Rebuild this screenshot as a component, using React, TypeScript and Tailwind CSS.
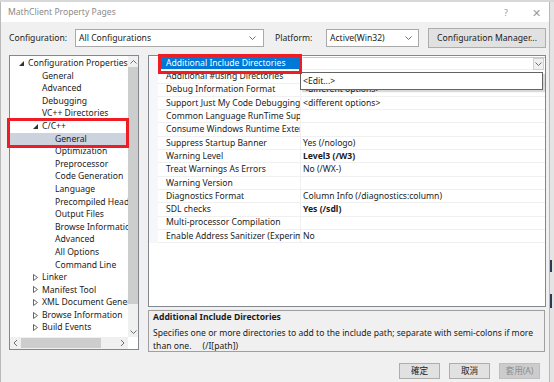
import React from 'react';

// --- Tree & grid data ---
type TreeItem = { label: string; level: number; arrow?: 'open' | 'closed'; selected?: boolean };

const treeItems: TreeItem[] = [
  { label: 'Configuration Properties', level: 0, arrow: 'open' },
  { label: 'General', level: 1 },
  { label: 'Advanced', level: 1 },
  { label: 'Debugging', level: 1 },
  { label: 'VC++ Directories', level: 1 },
  { label: 'C/C++', level: 1, arrow: 'open' },
  { label: 'General', level: 2, selected: true },
  { label: 'Optimization', level: 2 },
  { label: 'Preprocessor', level: 2 },
  { label: 'Code Generation', level: 2 },
  { label: 'Language', level: 2 },
  { label: 'Precompiled Headers', level: 2 },
  { label: 'Output Files', level: 2 },
  { label: 'Browse Information', level: 2 },
  { label: 'Advanced', level: 2 },
  { label: 'All Options', level: 2 },
  { label: 'Command Line', level: 2 },
  { label: 'Linker', level: 1, arrow: 'closed' },
  { label: 'Manifest Tool', level: 1, arrow: 'closed' },
  { label: 'XML Document Generator', level: 1, arrow: 'closed' },
  { label: 'Browse Information', level: 1, arrow: 'closed' },
  { label: 'Build Events', level: 1, arrow: 'closed' },
];

type Prop = { name: string; value?: string; bold?: boolean };

const props: Prop[] = [
  { name: 'Additional Include Directories' },
  { name: 'Additional #using Directories' },
  { name: 'Debug Information Format', value: '<different options>' },
  { name: 'Support Just My Code Debugging', value: '<different options>' },
  { name: 'Common Language RunTime Support' },
  { name: 'Consume Windows Runtime Extension' },
  { name: 'Suppress Startup Banner', value: 'Yes (/nologo)' },
  { name: 'Warning Level', value: 'Level3 (/W3)', bold: true },
  { name: 'Treat Warnings As Errors', value: 'No (/WX-)' },
  { name: 'Warning Version' },
  { name: 'Diagnostics Format', value: 'Column Info (/diagnostics:column)' },
  { name: 'SDL checks', value: 'Yes (/sdl)', bold: true },
  { name: 'Multi-processor Compilation' },
  { name: 'Enable Address Sanitizer (Experimental)', value: 'No' },
];

// arrow start per tree level; text follows 9px later
const indent = ['pl-[9px]', 'pl-[23px]', 'pl-[36px]'];

function Chevron({ className = '' }: { className?: string }) {
  return (
    <svg width="7" height="4" viewBox="0 0 7 4" className={className}>
      <path d="M0.5 0.5 L3.5 3.5 L6.5 0.5" fill="none" stroke="#606060" strokeWidth="0.9" />
    </svg>
  );
}

function Arrow({ kind }: { kind?: 'open' | 'closed' }) {
  return (
    <span className="w-[9px] shrink-0 flex items-center">
      {kind === 'open' && (
        <svg width="5" height="5" viewBox="0 0 5 5">
          <polygon points="5,0 5,5 0,5" fill="#333" />
        </svg>
      )}
      {kind === 'closed' && (
        <svg width="5" height="7" viewBox="0 0 5 7">
          <polygon points="0.5,0.5 4.5,3.5 0.5,6.5" fill="none" stroke="#555" strokeWidth="0.9" />
        </svg>
      )}
    </span>
  );
}

function TreePanel() {
  return (
    <div className="relative w-[130px] h-[295px] border border-[#828790] bg-white flex flex-col">
      <div className="flex flex-1 min-h-0">
        <div className="flex-1 min-w-0 overflow-hidden pt-[1px]">
          {treeItems.map((it, i) => (
            <div
              key={i}
              className={`h-[12.6px] flex items-center whitespace-nowrap ${indent[it.level]} ${it.selected ? 'bg-[#ccd2de]' : ''}`}
            >
              <Arrow kind={it.arrow} />
              <span>{it.label}</span>
            </div>
          ))}
        </div>
        {/* vertical scrollbar */}
        <div className="w-[10px] flex flex-col bg-[#f0f0f0]">
          <div className="h-[11px] flex items-center justify-center">
            <Chevron className="rotate-180" />
          </div>
          <div className="h-[237px] bg-[#cdcdcd]" />
          <div className="flex-1" />
          <div className="h-[11px] flex items-center justify-center">
            <Chevron />
          </div>
        </div>
      </div>
      {/* horizontal scrollbar */}
      <div className="h-[12px] flex bg-[#f0f0f0]">
        <div className="w-[11px] flex items-center justify-center">
          <Chevron className="rotate-90" />
        </div>
        <div className="w-[80px] my-[1px] bg-[#cdcdcd]" />
        <div className="flex-1" />
        <div className="w-[11px] flex items-center justify-center">
          <Chevron className="-rotate-90" />
        </div>
        <div className="w-[10px] bg-white" />
      </div>
      {/* red highlight box */}
      <div className="absolute left-[-3px] top-[62px] w-[122px] h-[30px] border-[3px] border-[#ee1c25]" />
    </div>
  );
}

function PropertyGrid() {
  return (
    <div className="relative w-[398px] h-[252px] border border-[#828790] bg-white">
      <div className="flex flex-col pt-[1px]">
        {props.map((p, i) => (
          <div key={i} className="h-[13.3px] flex">
            <div className="w-[9px] bg-[#f5f7fb]" />
            <div className="w-[143px] flex items-center pl-[3px] border-b border-[#f0f0f0] border-r overflow-hidden whitespace-nowrap">
              {i === 0 ? (
                <span className="bg-[#0078d7] text-white pl-[5px] w-[138px] h-[12px] flex items-center">{p.name}</span>
              ) : (
                <span className="pl-[5px]">{p.name}</span>
              )}
            </div>
            <div className={`flex-1 flex items-center pl-[2px] border-b border-[#f0f0f0] whitespace-nowrap ${p.bold ? 'font-bold' : ''}`}>
              {i === 0 ? (
                <div className="flex-1 h-full flex items-center justify-end border-t border-[#c8c8c8] pr-[1px]">
                  <div className="w-[11px] h-[12px] bg-[#f0f0f0] border border-[#cfcfcf] flex items-center justify-center">
                    <Chevron />
                  </div>
                </div>
              ) : (
                p.value
              )}
            </div>
          </div>
        ))}
      </div>
      {/* open dropdown list */}
      <div className="absolute left-[151px] top-[16px] w-[243px] h-[18px] bg-white border border-[#646464] shadow-[2px_2px_1px_rgba(0,0,0,0.15)] flex items-center pl-[2px]">
        &lt;Edit...&gt;
      </div>
      {/* red highlight box */}
      <div className="absolute left-[9px] top-[-2px] w-[144px] h-[20px] border-[3px] border-[#ee1c25]" />
    </div>
  );
}

export default function App() {
  return (
    <div className="w-[554px] h-[382px] bg-[#e8e8e8] overflow-hidden flex flex-col font-['Noto_Sans','Noto_Sans_CJK_TC',sans-serif] text-[8.6px] text-[#1b1b1b] leading-none">
      <div className="h-[2px] bg-[#d8d8d8]" />
      <div className="flex flex-1">
        <div className="w-[550px] bg-[#f0f0f0] border-l border-r border-[#b8b8b8] flex flex-col">
          {/* title bar */}
          <div className="h-[20px] bg-white flex items-center justify-between pl-[7px] pr-[8px] text-[8.6px] text-[#8a8a8a]">
            <span>MathClient Property Pages</span>
            <div className="flex items-center gap-[24px] text-[11px] text-[#9a9a9a]">
              <span className="text-[9px]">?</span>
              <span>✕</span>
            </div>
          </div>

          {/* configuration row */}
          <div className="flex items-center mt-[6px] pl-[8px] h-[20px]">
            <span className="w-[66px]">Configuration:</span>
            <div className="w-[189px] h-[18px] bg-white border border-[#a9a9a9] flex items-center justify-between pl-[3px] pr-[7px]">
              <span>All Configurations</span>
              <Chevron />
            </div>
            <span className="ml-[11px] w-[51px]">Platform:</span>
            <div className="w-[93px] h-[18px] bg-white border border-[#a9a9a9] flex items-center justify-between pl-[3px] pr-[6px]">
              <span>Active(Win32)</span>
              <Chevron />
            </div>
            <div className="ml-[9px] w-[118px] h-[20px] bg-[#e1e1e1] border border-[#adadad] flex items-center justify-center">
              Configuration Manager...
            </div>
          </div>

          {/* main */}
          <div className="flex mt-[7px] pl-[8px] gap-[9px]">
            <TreePanel />
            <div className="flex flex-col gap-[3px]">
              <PropertyGrid />
              <div className="w-[397px] h-[42px] border border-[#a0a0a0] bg-[#f0f0f0] px-[4px] pt-[2px] flex flex-col">
                <span className="font-bold">Additional Include Directories</span>
                <span className="mt-[5px] leading-[13px]">
                  Specifies one or more directories to add to the include path; separate with semi-colons if more than one.
                  &nbsp;&nbsp;&nbsp;&nbsp;(/I[path])
                </span>
              </div>
            </div>
          </div>

          {/* buttons */}
          <div className="flex justify-end gap-[9px] pr-[9px] mt-[11px]">
            <div className="w-[41px] h-[16px] bg-[#e1e1e1] border border-[#adadad] flex items-center justify-center">確定</div>
            <div className="w-[41px] h-[16px] bg-[#e1e1e1] border border-[#adadad] flex items-center justify-center">取消</div>
            <div className="w-[41px] h-[16px] bg-[#cccccc] border border-[#bfbfbf] text-[#8d8d8d] flex items-center justify-center">套用(A)</div>
          </div>
        </div>
        <div className="flex-1 flex flex-col bg-[#e4e4e4]">
          <div className="h-[258px]" />
          <div className="h-[12px] w-[2px] bg-[#2b3a55]" />
          <div className="h-[22px]" />
          <div className="h-[14px] w-[2px] bg-[#2b3a55]" />
        </div>
      </div>
    </div>
  );
}
